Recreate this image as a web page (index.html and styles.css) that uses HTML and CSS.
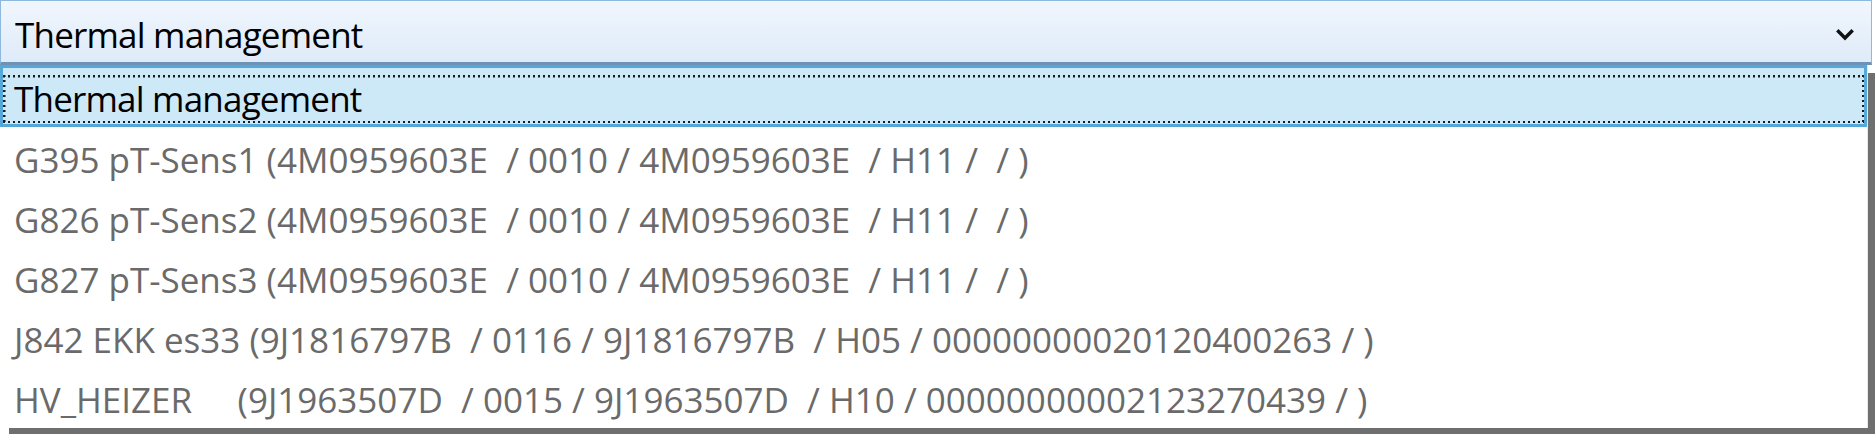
FILE: index.html
```html
<!DOCTYPE html>
<html>
<head>
<meta charset="utf-8">
<link rel="stylesheet" href="styles.css">
</head>
<body>
<div class="combo">
  <span class="combo-text">Thermal management</span>
  <svg class="chev" width="18" height="12" viewBox="0 0 18 12"><path d="M2.5 2.5 L9 9 L15.5 2.5" fill="none" stroke="#111" stroke-width="3.4" stroke-linecap="square"/></svg>
</div>
<div class="list">
  <div class="item sel"><div class="focus">Thermal management</div></div>
  <div class="item">G395 pT-Sens1 (4M0959603E  / 0010 / 4M0959603E  / H11 /  / )</div>
  <div class="item">G826 pT-Sens2 (4M0959603E  / 0010 / 4M0959603E  / H11 /  / )</div>
  <div class="item">G827 pT-Sens3 (4M0959603E  / 0010 / 4M0959603E  / H11 /  / )</div>
  <div class="item">J842 EKK es33 (9J1816797B  / 0116 / 9J1816797B  / H05 / 00000000020120400263 / )</div>
  <div class="item">HV_HEIZER     (9J1963507D  / 0015 / 9J1963507D  / H10 / 00000000002123270439 / )</div>
</div>
</body>
</html>
```
FILE: styles.css
```css
html, body {
  margin: 0;
  padding: 0;
}
body {
  width: 1876px;
  height: 435px;
  overflow: hidden;
  background: #ffffff;
  font-family: "Open Sans", "Noto Sans", sans-serif;
}
.combo {
  box-sizing: border-box;
  width: 1872px;
  height: 65px;
  border: 1px solid #8fb8df;
  border-bottom: 3px solid #6d92b6;
  background: linear-gradient(#f0f6fd, #dfebf9);
  display: flex;
  align-items: center;
  justify-content: space-between;
  padding: 6px 17px 0 14px;
  font-size: 35px;
  color: #000;
}
.combo-text {
  white-space: pre;
  letter-spacing: -0.8px;
}
.list {
  box-sizing: border-box;
  width: 1868px;
  height: 363px;
  border-right: 1px solid #e8e8e8;
  box-shadow: 8px 7px 0 -1px #6f6f6f;
  background: #fff;
}
.item {
  box-sizing: border-box;
  height: 60px;
  line-height: 58px;
  padding-top: 4px;
  padding-left: 14px;
  white-space: pre;
  font-size: 35px;
  color: #6a6a6a;
}
.item.sel {
  height: 62px;
  background: #cde8f7;
  border: 3px solid #55a8d8;
  padding: 7px 0 0 0;
  color: #000;
}
.focus {
  box-sizing: border-box;
  height: 48px;
  line-height: 48px;
  padding: 0 0 0 11px;
  letter-spacing: -0.8px;
  background:
    repeating-linear-gradient(90deg, #1a1a1a 0 2.5px, transparent 2.5px 5px) left top / 100% 2.5px no-repeat,
    repeating-linear-gradient(90deg, #1a1a1a 0 2.5px, transparent 2.5px 5px) left bottom / 100% 2.5px no-repeat,
    repeating-linear-gradient(180deg, #1a1a1a 0 2.5px, transparent 2.5px 5px) left top / 2.5px 100% no-repeat,
    repeating-linear-gradient(180deg, #1a1a1a 0 2.5px, transparent 2.5px 5px) right top / 2.5px 100% no-repeat;
}
```
